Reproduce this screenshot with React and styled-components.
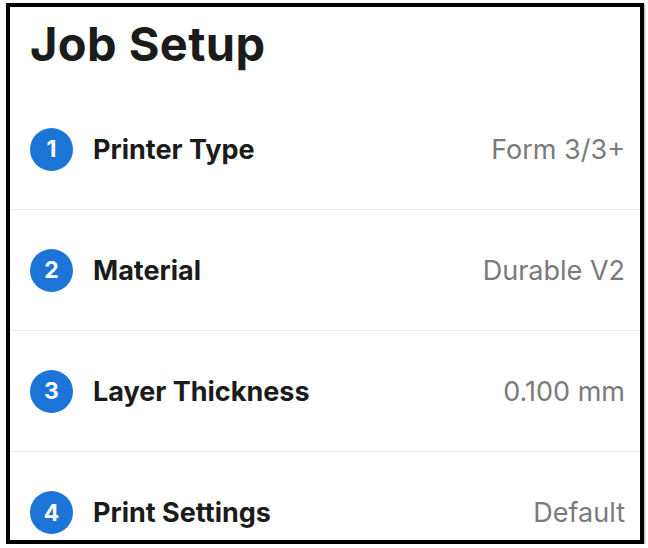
import React from "react";
import styled, { createGlobalStyle } from "styled-components";

const GlobalStyle = createGlobalStyle`
  html, body {
    margin: 0;
    padding: 0;
    background: #ffffff;
  }
  body {
    font-family: "Inter", "Open Sans", sans-serif;
  }
`;

const Frame = styled.div`
  box-sizing: border-box;
  margin: 3px 0 0 6px;
  width: 638px;
  height: 541px;
  border: 4px solid #000;
  background: #fff;
  overflow: hidden;
  box-shadow: 1px 1px 2px rgba(0, 0, 0, 0.35);
`;

const Title = styled.h1`
  margin: 0;
  height: 82px;
  box-sizing: border-box;
  padding: 9px 0 0 20px;
  font-size: 47px;
  font-weight: 700;
  color: #1b1b1b;
  line-height: 56px;
  letter-spacing: 0.4px;
`;

const Row = styled.div`
  display: flex;
  align-items: center;
  height: 121px;
  box-sizing: border-box;
  padding: 0 15px 0 20px;
  border-bottom: 1px solid #e9e9e9;

  &:last-child {
    border-bottom: none;
  }
`;

const Step = styled.span`
  display: flex;
  align-items: center;
  justify-content: center;
  flex: none;
  width: 43px;
  height: 43px;
  border-radius: 50%;
  background: #1c74d6;
  color: #fff;
  font-size: 23px;
  font-weight: 700;
`;

const Label = styled.span`
  margin-left: 20px;
  font-size: 27px;
  font-weight: 700;
  color: #1b1b1b;
`;

const Value = styled.span`
  margin-left: auto;
  font-size: 27px;
  font-weight: 400;
  color: #7a7a7a;
`;

const steps = [
  { label: "Printer Type", value: "Form 3/3+" },
  { label: "Material", value: "Durable V2" },
  { label: "Layer Thickness", value: "0.100 mm" },
  { label: "Print Settings", value: "Default" },
];

export default function App() {
  return (
    <>
      <GlobalStyle />
      <Frame>
        <Title>Job Setup</Title>
        {steps.map((s, i) => (
          <Row key={s.label}>
            <Step>{i + 1}</Step>
            <Label>{s.label}</Label>
            <Value>{s.value}</Value>
          </Row>
        ))}
      </Frame>
    </>
  );
}
